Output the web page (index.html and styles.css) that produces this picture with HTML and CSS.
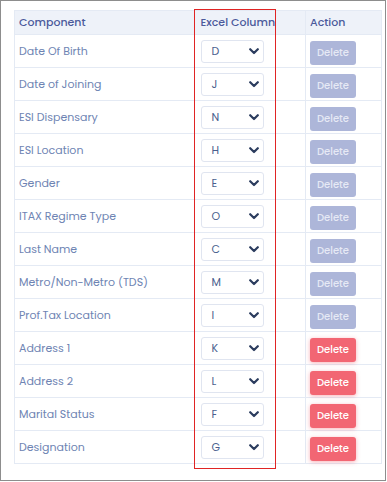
FILE: index.html
```html
<!DOCTYPE html>
<html>
<head>
<meta charset="utf-8">
<link rel="stylesheet" href="styles.css">
</head>
<body>
<div class="frame">
  <div class="wrap">
    <table class="grid">
      <colgroup>
        <col class="c1"><col class="c2"><col class="c3">
      </colgroup>
      <thead>
        <tr><th>Component</th><th class="mid">Excel Column</th><th class="act">Action</th></tr>
      </thead>
      <tbody id="rows"></tbody>
    </table>
    <div class="highlight"></div>
  </div>
</div>
<script>
const data = [
  ["Date Of Birth","D",0],["Date of Joining","J",0],["ESI Dispensary","N",0],["ESI Location","H",0],
  ["Gender","E",0],["ITAX Regime Type","O",0],["Last Name","C",0],["Metro/Non-Metro (TDS)","M",0],
  ["Prof.Tax Location","I",0],["Address 1","K",1],["Address 2","L",1],["Marital Status","F",1],["Designation","G",1]
];
const chev = '<svg class="chev" viewBox="0 0 10 7" width="10" height="7"><path d="M1.2 1.2 L5 5 L8.8 1.2" fill="none" stroke="#2b3c5e" stroke-width="2.2" stroke-linecap="round" stroke-linejoin="round"/></svg>';
document.getElementById('rows').innerHTML = data.map(d =>
  `<tr><td class="name">${d[0]}</td><td class="mid"><div class="sel"><span>${d[1]}</span>${chev}</div></td><td class="act"><button class="btn ${d[2] ? 'on' : 'off'}">Delete</button></td></tr>`
).join('');
</script>
</body>
</html>
```
FILE: styles.css
```css
html, body { margin: 0; padding: 0; background: #fff; }
body { font-family: "Poppins", "Open Sans", "Noto Sans", sans-serif; }
.frame {
  width: 386px; height: 481px; box-sizing: border-box;
  border: 1px solid #8d8d8d;
  padding: 9px 0 0 13px;
}
.wrap { position: relative; width: 367px; }
.grid {
  width: 367px; border-collapse: collapse; table-layout: fixed;
  border: 1px solid #e4eaf4;
}
.c1 { width: 180px; } .c2 { width: 111px; } .c3 { width: 76px; }
th {
  background: #eef2f9; color: #4b5a9c; font-weight: 500; font-size: 11px;
  height: 24px; padding: 0 0 0 4px; text-align: left; box-sizing: border-box;
  border-bottom: 1px solid #e4eaf4;
}
th.mid { padding-left: 6px; }
th.act { padding-left: 4px; border-left: 1px solid #e4eaf4; }
td {
  height: 33px; box-sizing: border-box; padding: 0 0 0 4px;
  border-bottom: 1px solid #e4eaf4; vertical-align: middle;
}
td.name { color: #6e84b3; font-size: 11px; }
td.mid { padding-left: 6px; }
td.act { padding-left: 4px; border-left: 1px solid #e4eaf4; }
.sel {
  width: 63px; height: 23px; box-sizing: border-box;
  border: 1px solid #e0e5f0; border-radius: 3px; background: #fff;
  display: flex; align-items: center; justify-content: space-between;
  padding: 0 4px 0 10px;
  color: #4a5f8e; font-size: 11px;
}
.chev { display: block; }
.btn {
  width: 46px; height: 24px; border: 0; border-radius: 3px;
  font-family: inherit; font-size: 10px; font-weight: 500; color: #fff; padding: 0;
}
.btn.off { background: #adb6d9; color: #e6e9f5; }
.btn.on { background: #f26673; box-shadow: 0 1px 4px rgba(242, 102, 115, 0.5); }
.highlight {
  position: absolute; left: 180px; top: -1px; width: 82px; height: 460px;
  box-sizing: border-box; border: 1px solid #e02424; pointer-events: none;
}
```
